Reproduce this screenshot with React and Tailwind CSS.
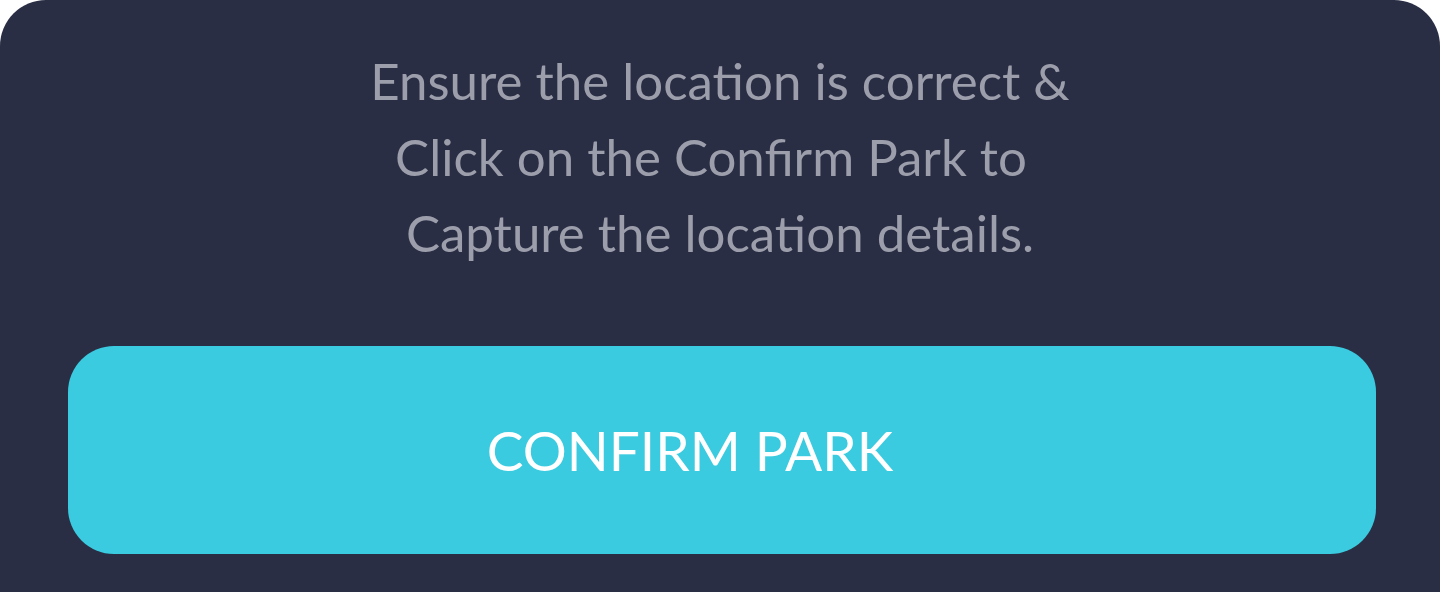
export default function App() {
  return (
    <div className="w-[1440px] h-[592px] bg-white overflow-hidden">
      <div
        className="h-[640px] bg-[#2a2e44] rounded-t-[46px] flex flex-col pt-[43px]"
        style={{ fontFamily: 'Lato, "Open Sans", sans-serif' }}
      >
        <p className="text-[#9c9eab] text-[51px] leading-[76px] text-center">
          <span className="block">Ensure the location is correct &amp;</span>
          <span className="block pr-[18px]">Click on the Confirm Park to</span>
          <span className="block">Capture the location details.</span>
        </p>
        <button className="mt-[75px] ml-[68px] w-[1308px] h-[208px] rounded-[46px] bg-[#3acbe0] text-white text-[55px] flex items-center justify-center pr-[64px]">
          CONFIRM PARK
        </button>
      </div>
    </div>
  );
}
